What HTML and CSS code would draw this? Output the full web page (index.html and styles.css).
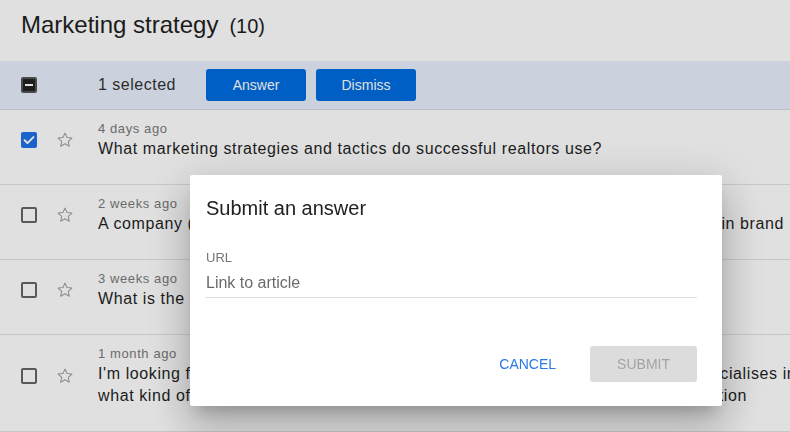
FILE: index.html
```html
<!DOCTYPE html>
<html lang="en">
<head>
<meta charset="utf-8">
<title>Marketing strategy</title>
<link rel="stylesheet" href="styles.css">
</head>
<body>
<div class="page">
  <header class="header">
    <h1 class="title">Marketing strategy<span class="count">(10)</span></h1>
  </header>

  <div class="selbar">
    <span class="cb cb-indeterminate"><span class="dash"></span></span>
    <span class="sel-count">1 selected</span>
    <div class="sel-actions">
      <button class="btn-primary">Answer</button>
      <button class="btn-primary">Dismiss</button>
    </div>
  </div>

  <ul class="list">
    <li class="row">
      <span class="cb cb-checked">
        <svg viewBox="0 0 16 16" width="16" height="16"><path d="M3.6 8.3l2.9 2.8 5.9-6" fill="none" stroke="#fff" stroke-width="2" stroke-linecap="round" stroke-linejoin="round"/></svg>
      </span>
      <svg class="star" viewBox="0 0 24 24" width="18" height="18"><path d="M12 2.8l2.75 5.9 6.45.75-4.8 4.45 1.3 6.4L12 17.1l-5.7 3.2 1.3-6.4-4.8-4.45 6.45-.75z" fill="none" stroke="currentColor" stroke-width="1.4" stroke-linejoin="round"/></svg>
      <div class="text">
        <div class="time">4 days ago</div>
        <div class="q">What marketing strategies and tactics do successful realtors use?</div>
      </div>
    </li>
    <li class="row">
      <span class="cb"></span>
      <svg class="star" viewBox="0 0 24 24" width="18" height="18"><path d="M12 2.8l2.75 5.9 6.45.75-4.8 4.45 1.3 6.4L12 17.1l-5.7 3.2 1.3-6.4-4.8-4.45 6.45-.75z" fill="none" stroke="currentColor" stroke-width="1.4" stroke-linejoin="round"/></svg>
      <div class="text">
        <div class="time">2 weeks ago</div>
        <div class="q">A company (B2B, twenty staff) wants more leads: should it invest in social ads or in brand</div>
      </div>
    </li>
    <li class="row">
      <span class="cb"></span>
      <svg class="star" viewBox="0 0 24 24" width="18" height="18"><path d="M12 2.8l2.75 5.9 6.45.75-4.8 4.45 1.3 6.4L12 17.1l-5.7 3.2 1.3-6.4-4.8-4.45 6.45-.75z" fill="none" stroke="currentColor" stroke-width="1.4" stroke-linejoin="round"/></svg>
      <div class="text">
        <div class="time">3 weeks ago</div>
        <div class="q">What is the best way to measure ROI on social media ads?</div>
      </div>
    </li>
    <li class="row">
      <span class="cb"></span>
      <svg class="star" viewBox="0 0 24 24" width="18" height="18"><path d="M12 2.8l2.75 5.9 6.45.75-4.8 4.45 1.3 6.4L12 17.1l-5.7 3.2 1.3-6.4-4.8-4.45 6.45-.75z" fill="none" stroke="currentColor" stroke-width="1.4" stroke-linejoin="round"/></svg>
      <div class="text">
        <div class="time">1 month ago</div>
        <div class="q">I'm looking for a marketing agency to work with this year, and I need one that specialises in what kind of clients we have, so how should I judge their results, and their reputation</div>
      </div>
    </li>
  </ul>
</div>

<div class="scrim"></div>

<div class="dialog" role="dialog">
  <h2 class="dialog-title">Submit an answer</h2>
  <div class="field">
    <label class="field-label">URL</label>
    <div class="field-input">Link to article</div>
  </div>
  <div class="dialog-actions">
    <button class="btn-text">CANCEL</button>
    <button class="btn-disabled">SUBMIT</button>
  </div>
</div>
</body>
</html>
```

FILE: styles.css
```css
html, body {
  margin: 0;
  padding: 0;
  overflow: hidden;
  background: #ffffff;
  font-family: "Liberation Sans", Arial, Helvetica, sans-serif;
  color: #1f1f1f;
}

.page {
  width: 840px;
}

/* header */
.header {
  height: 61px;
  box-sizing: border-box;
  padding: 11px 0 0 21px;
}

.title {
  margin: 0;
  font-size: 24px;
  line-height: 28px;
  font-weight: 400;
  color: #1f1f1f;
}

.count {
  font-size: 20px;
  margin-left: 11px;
}

/* selection bar */
.selbar {
  height: 49px;
  box-sizing: border-box;
  background: #e7effc;
  border-bottom: 1px solid #d3d9e3;
  display: flex;
  align-items: center;
  padding-left: 21px;
}

.sel-count {
  margin-left: 61px;
  width: 108px;
  font-size: 16px;
  letter-spacing: 0.5px;
  color: #333;
}

.sel-actions {
  display: flex;
  gap: 10px;
}

.btn-primary {
  width: 100px;
  height: 32px;
  border: 0;
  border-radius: 3px;
  background: #006de1;
  color: #fff;
  font-family: inherit;
  font-size: 14px;
  padding: 0;
}

/* checkboxes */
.cb {
  width: 16px;
  height: 16px;
  box-sizing: border-box;
  border: 2px solid #666;
  border-radius: 2px;
  flex: none;
  display: flex;
  align-items: center;
  justify-content: center;
}

.cb-checked {
  background: #1e71e8;
  border-color: #1e71e8;
}

.cb-checked svg {
  flex: none;
}

.cb-indeterminate {
  background: #222;
  border-color: #555;
}

.dash {
  width: 8px;
  height: 2px;
  background: #fff;
}

/* list */
.list {
  list-style: none;
  margin: 0;
  padding: 0;
}

.row {
  display: flex;
  align-items: center;
  padding: 9px 20px 24px 21px;
  border-bottom: 1px solid #e3e3e3;
}

.star {
  flex: none;
  margin-left: 19px;
  color: #a0a0a0;
}

.text {
  margin-left: 24px;
  flex: 1;
  min-width: 0;
}

.time {
  font-size: 13px;
  line-height: 19px;
  letter-spacing: 0.6px;
  color: #7a7a7a;
}

.q {
  font-size: 16px;
  line-height: 22px;
  letter-spacing: 0.6px;
  color: #1f1f1f;
}

/* scrim + dialog */
.scrim {
  position: fixed;
  inset: 0;
  background: rgba(0, 0, 0, 0.12);
}

.dialog {
  position: fixed;
  left: 190px;
  top: 175px;
  width: 532px;
  box-sizing: border-box;
  padding: 21px 25px 24px 16px;
  background: #fff;
  border-radius: 2px;
  box-shadow: 0 11px 15px -7px rgba(0, 0, 0, 0.2),
              0 24px 38px 3px rgba(0, 0, 0, 0.14),
              0 9px 46px 8px rgba(0, 0, 0, 0.12);
}

.dialog-title {
  margin: 0;
  font-size: 20px;
  line-height: 24px;
  font-weight: 400;
  color: #212121;
}

.field {
  margin-top: 30px;
}

.field-label {
  display: block;
  font-size: 13px;
  line-height: 16px;
  color: #757575;
}

.field-input {
  padding: 7px 0 4px;
  font-size: 16px;
  line-height: 20px;
  color: #6b6b6b;
  border-bottom: 1px solid #dcdcdc;
}

.dialog-actions {
  margin-top: 48px;
  display: flex;
  justify-content: flex-end;
  gap: 7px;
}

.btn-text,
.btn-disabled {
  height: 36px;
  padding: 0 27px;
  border: 0;
  border-radius: 3px;
  font-family: inherit;
  font-size: 14px;
}

.btn-text {
  background: transparent;
  color: #2a78e4;
}

.btn-disabled {
  background: #dcdcdc;
  color: #a3a3a3;
}
```
